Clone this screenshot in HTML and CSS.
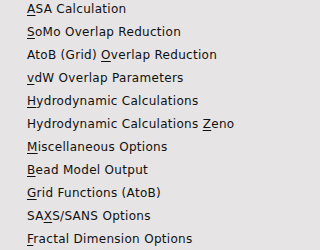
FILE: index.html
```html
<!DOCTYPE html>
<html>
<head>
<meta charset="utf-8">
<link rel="stylesheet" href="styles.css">
</head>
<body>
<ul class="menu">
  <li class="item"><span class="mn">A</span>SA Calculation</li>
  <li class="item"><span class="mn">S</span>oMo Overlap Reduction</li>
  <li class="item">AtoB (Grid) <span class="mn">O</span>verlap Reduction</li>
  <li class="item"><span class="mn">v</span>dW Overlap Parameters</li>
  <li class="item"><span class="mn">H</span>ydrodynamic Calculations</li>
  <li class="item">Hydrodynamic Calculations <span class="mn">Z</span>eno</li>
  <li class="item"><span class="mn">M</span>iscellaneous Options</li>
  <li class="item"><span class="mn">B</span>ead Model Output</li>
  <li class="item"><span class="mn">G</span>rid Functions (AtoB)</li>
  <li class="item">SA<span class="mn">X</span>S/SANS Options</li>
  <li class="item"><span class="mn">F</span>ractal Dimension Options</li>
</ul>
</body>
</html>
```
FILE: styles.css
```css
html, body {
  margin: 0;
  padding: 0;
  background: #e6e4e4;
  width: 272px;
  height: 250px;
  overflow: hidden;
}
.menu {
  list-style: none;
  margin: -2px 0 0 0;
  padding: 0 0 0 27px;
  display: flex;
  flex-direction: column;
  font-family: "DejaVu Sans", sans-serif;
  font-size: 12px;
  letter-spacing: 0.3px;
  color: #101010;
}
.item {
  height: 23px;
  line-height: 23px;
  white-space: nowrap;
}
.mn {
  text-decoration: underline;
  text-underline-offset: 2px;
  text-decoration-thickness: 1px;
}
```
